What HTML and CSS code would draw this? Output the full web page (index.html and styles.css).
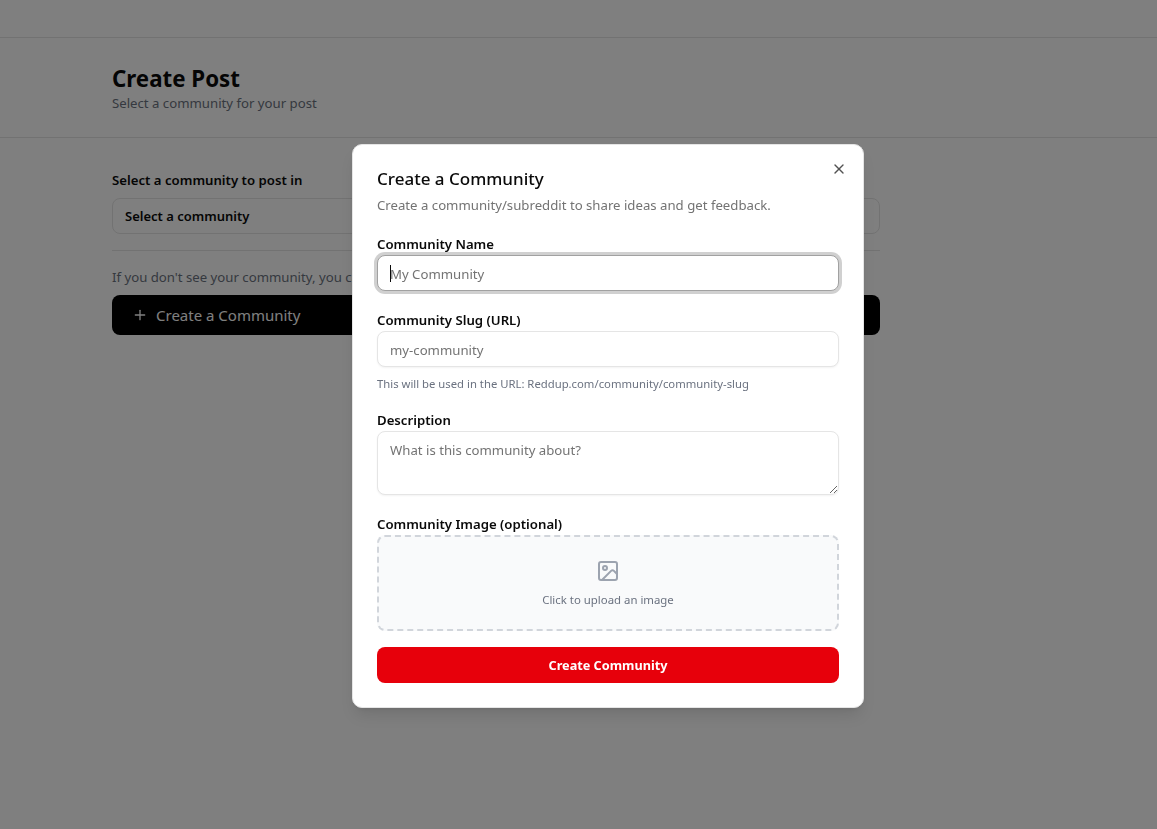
FILE: index.html
```html
<!DOCTYPE html>
<html lang="en">
<head>
    <meta charset="UTF-8">
    <meta name="viewport" content="width=device-width, initial-scale=1.0">
    <title>Create Post</title>
    <link rel="stylesheet" href="styles.css">
</head>
<body>
    <div class="navbar"></div>

    <div class="page-header">
        <h1>Create Post</h1>
        <p>Select a community for your post</p>
    </div>

    <div class="content">
        <div class="field-label">Select a community to post in</div>
        <div class="select-box">Select a community</div>
        <div class="divider"></div>
        <p class="note">If you don't see your community, you can create one below.</p>
        <button class="create-btn">
            <svg class="plus-icon" viewBox="0 0 24 24" fill="none" stroke="currentColor" stroke-width="2" stroke-linecap="round" stroke-linejoin="round">
                <path d="M5 12h14"/>
                <path d="M12 5v14"/>
            </svg>
            Create a Community
        </button>
    </div>

    <div class="overlay"></div>

    <div class="modal">
        <svg class="close-icon" viewBox="0 0 24 24" fill="none" stroke="currentColor" stroke-width="2" stroke-linecap="round" stroke-linejoin="round">
            <path d="M18 6 6 18"/>
            <path d="m6 6 12 12"/>
        </svg>

        <h2>Create a Community</h2>
        <p class="modal-sub">Create a community/subreddit to share ideas and get feedback.</p>

        <div class="form-group">
            <label for="name">Community Name</label>
            <div class="input-wrap">
                <input type="text" id="name" class="focused" placeholder="My Community">
                <span class="caret"></span>
            </div>
        </div>

        <div class="form-group">
            <label for="slug">Community Slug (URL)</label>
            <input type="text" id="slug" placeholder="my-community">
            <p class="hint">This will be used in the URL: Reddup.com/community/community-slug</p>
        </div>

        <div class="form-group">
            <label for="desc">Description</label>
            <textarea id="desc" placeholder="What is this community about?"></textarea>
        </div>

        <div class="form-group">
            <label>Community Image (optional)</label>
            <div class="dropzone">
                <svg class="image-icon" viewBox="0 0 24 24" fill="none" stroke="currentColor" stroke-width="2" stroke-linecap="round" stroke-linejoin="round">
                    <rect x="3" y="3" width="18" height="18" rx="2"/>
                    <circle cx="9" cy="9" r="2"/>
                    <path d="m21 15-3.086-3.086a2 2 0 0 0-2.828 0L6 21"/>
                </svg>
                <span>Click to upload an image</span>
            </div>
        </div>

        <button class="submit-btn">Create Community</button>
    </div>
</body>
</html>
```

FILE: styles.css
```css
* {
    box-sizing: border-box;
}

body {
    margin: 0;
    min-height: 829px;
    font-family: "Noto Sans", "Open Sans", sans-serif;
    background-color: #ffffff;
    color: #0a0a0a;
    overflow: hidden;
}

/* Page behind the dialog */
.navbar {
    height: 38px;
    border-bottom: 1px solid #e5e5e5;
}

.page-header {
    height: 100px;
    padding: 28px 112px 0;
    border-bottom: 1px solid #e5e5e5;
}

.page-header h1 {
    margin: 0;
    font-size: 22.3px;
    line-height: 26px;
    font-weight: 700;
}

.page-header p {
    margin: 0;
    font-size: 13.2px;
    line-height: 22px;
    color: #6b7280;
}

.content {
    width: 768px;
    margin-left: 112px;
    padding-top: 32px;
}

.field-label {
    font-size: 13.2px;
    line-height: 20px;
    font-weight: 600;
}

.select-box {
    height: 36px;
    margin-top: 8px;
    padding: 0 12px;
    border: 1px solid #e5e5e5;
    border-radius: 8px;
    font-size: 13px;
    font-weight: 600;
    line-height: 34px;
}

.divider {
    height: 1px;
    margin-top: 16px;
    background-color: #e5e5e5;
}

.note {
    margin: 16px 0 0;
    font-size: 13.2px;
    line-height: 20px;
    color: #6b7280;
    white-space: nowrap;
}

.create-btn {
    display: flex;
    align-items: center;
    gap: 8px;
    width: 100%;
    height: 40px;
    margin-top: 8px;
    padding: 0 20px;
    border: none;
    border-radius: 8px;
    background-color: #000000;
    color: #ffffff;
    font-family: inherit;
    font-size: 15px;
}

.plus-icon {
    width: 16px;
    height: 16px;
}

.overlay {
    position: fixed;
    inset: 0;
    background-color: rgba(0, 0, 0, 0.5);
}

/* Dialog */
.modal {
    position: absolute;
    left: 352px;
    top: 144px;
    width: 512px;
    height: 564px;
    padding: 24px;
    background-color: #ffffff;
    border: 1px solid #e5e5e5;
    border-radius: 10px;
    box-shadow: 0 10px 15px -3px rgba(0, 0, 0, 0.1), 0 4px 6px -4px rgba(0, 0, 0, 0.1);
}

.close-icon {
    position: absolute;
    right: 16px;
    top: 16px;
    width: 16px;
    height: 16px;
    color: #525252;
}

.modal h2 {
    margin: 0;
    font-size: 17px;
    line-height: 20px;
    font-weight: 500;
}

.modal-sub {
    margin: 6px 0 0;
    font-size: 13.2px;
    line-height: 20px;
    color: #737373;
}

.form-group {
    margin-top: 22px;
}

.form-group label {
    display: block;
    font-size: 13.2px;
    line-height: 14px;
    font-weight: 600;
    margin-bottom: 4px;
}

.input-wrap {
    position: relative;
}

input, textarea {
    display: block;
    width: 100%;
    padding: 0 12px;
    border: 1px solid #e5e5e5;
    border-radius: 8px;
    background-color: #ffffff;
    font-family: inherit;
    font-size: 13.2px;
    color: #0a0a0a;
    box-shadow: 0 1px 2px rgba(0, 0, 0, 0.05);
    outline: none;
}

input {
    height: 36px;
    padding-top: 1px;
}

input.focused {
    border-color: #a1a1a1;
    box-shadow: 0 0 0 3px rgba(161, 161, 161, 0.5);
}

input::placeholder, textarea::placeholder {
    color: #737373;
    opacity: 1;
}

.caret {
    position: absolute;
    left: 13px;
    top: 10px;
    width: 1px;
    height: 17px;
    background-color: #0a0a0a;
}

textarea {
    height: 64px;
    padding: 8px 12px;
    line-height: 20px;
}

.hint {
    margin: 9px 0 0;
    font-size: 11.3px;
    line-height: 15px;
    color: #6b7280;
}

.dropzone {
    display: flex;
    flex-direction: column;
    align-items: center;
    justify-content: center;
    gap: 9px;
    height: 96px;
    border: 2px dashed #d1d5db;
    border-radius: 8px;
    background-color: #f9fafb;
    font-size: 11.4px;
    color: #6b7280;
}

.image-icon {
    width: 24px;
    height: 24px;
    color: #9ca3af;
}

.submit-btn {
    display: block;
    width: 100%;
    height: 36px;
    margin-top: 16px;
    border: none;
    border-radius: 8px;
    background-color: #e7000b;
    color: #ffffff;
    font-family: inherit;
    font-size: 12.7px;
    font-weight: 700;
}
```
